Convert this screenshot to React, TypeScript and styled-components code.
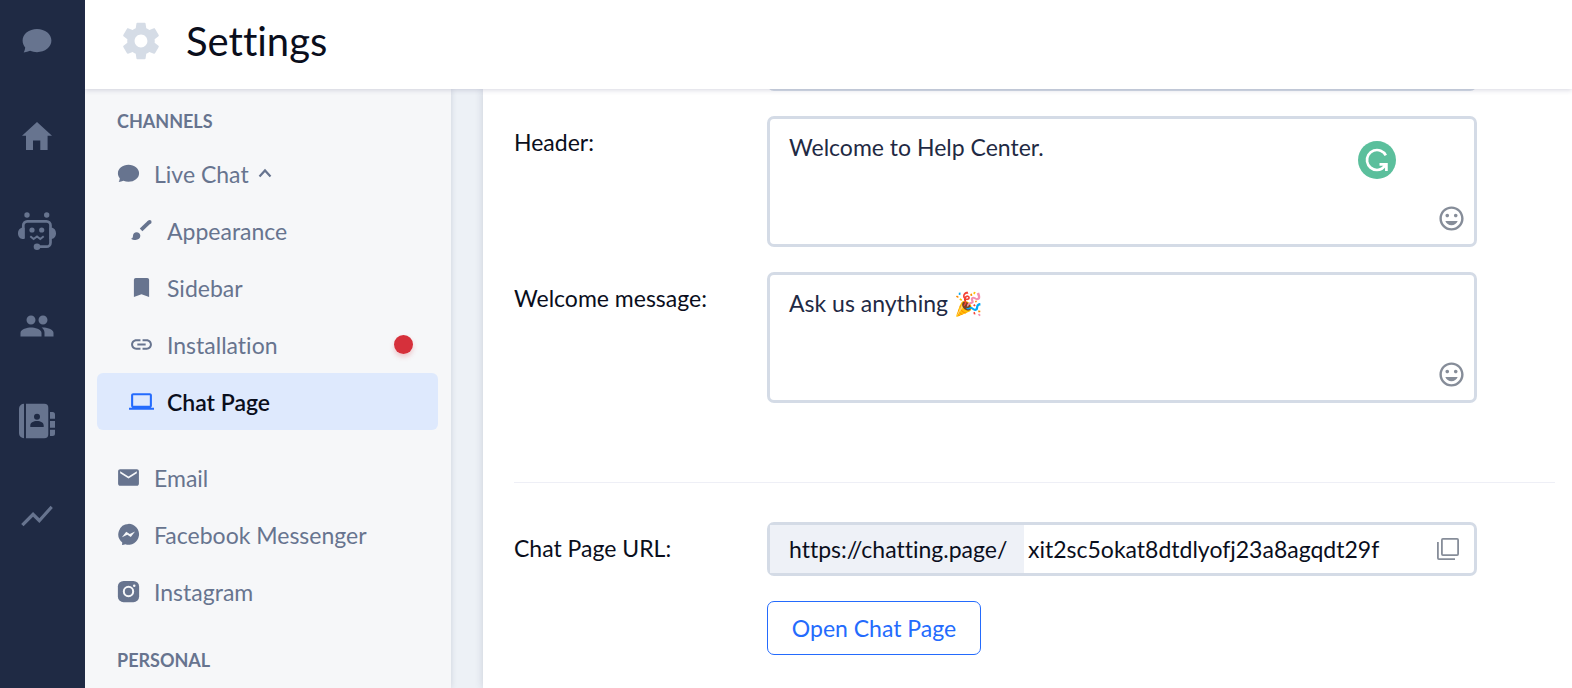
import React from "react";
import styled, { createGlobalStyle } from "styled-components";
import { MdPeople, MdShowChart, MdLink, MdLaptop, MdEmail, MdMood } from "react-icons/md";

const color = {
  rail: "#1f2a44",
  muted: "#67748f",
  ink: "#0a0e1c",
  field: "#1f2a44",
  border: "#d4dbe6",
  side: "#f6f7f9",
  gutter: "#edf1f6",
  active: "#dee9fd",
  blue: "#246bfd",
  icon: "#868d99",
};

const GlobalStyle = createGlobalStyle`
  * { box-sizing: border-box; }
  body {
    margin: 0;
    font-family: Lato, "Liberation Sans", sans-serif;
    font-size: 23px;
    line-height: 28px;
    font-variant-ligatures: none;
    color: ${color.ink};
    background: #fff;
  }
  button, input, textarea { font: inherit; font-variant-ligatures: none; color: inherit; }
  svg { display: block; flex: none; }
`;

const Shell = styled.div`
  display: grid;
  grid-template-columns: 85px minmax(0, 1fr);
  height: 100vh;
  overflow: hidden;
`;

const Rail = styled.nav`
  display: flex;
  flex-direction: column;
  gap: 55px;
  padding: 21px 11px 0 0;
  background: ${color.rail};
`;

const RailButton = styled.button`
  display: flex;
  align-items: center;
  justify-content: center;
  height: 40px;
  padding: 0;
  border: 0;
  background: none;
  color: ${color.muted};
  cursor: pointer;
`;

const Page = styled.div`
  display: grid;
  grid-template-rows: 89px minmax(0, 1fr);
  min-width: 0;
  min-height: 0;
`;

const TopBar = styled.header`
  position: relative;
  z-index: 1;
  display: flex;
  align-items: center;
  gap: 23px;
  padding: 0 34px 7px;
  background: #fff;
  color: #d5dce6;
  box-shadow: 0 1px 5px rgba(50, 50, 100, 0.2);
`;

const Title = styled.h1`
  margin: 0;
  font-size: 40px;
  line-height: 48px;
  font-weight: 400;
  color: ${color.ink};
`;

const Body = styled.div`
  display: grid;
  grid-template-columns: 366px minmax(0, 1fr);
  gap: 32px;
  min-height: 0;
  overflow: hidden;
  background: ${color.gutter};
`;

const Sidebar = styled.aside`
  padding: 20px 13px 0 12px;
  background: ${color.side};
  color: ${color.muted};
  overflow: hidden;
  box-shadow: 0 0 6px rgba(40, 50, 90, 0.16);
`;

const GroupTitle = styled.h2`
  margin: 0;
  padding: 0 20px;
  font-size: 18px;
  line-height: 24px;
  font-weight: 700;
`;

const NavList = styled.ul<{ $after: number }>`
  list-style: none;
  margin: 0 0 ${(p) => p.$after}px;
  padding: 0;
`;

const TopList = styled(NavList)`
  margin-top: 12px;
`;

const NavLink = styled.a<{ $nested?: boolean; $active?: boolean }>`
  display: flex;
  align-items: center;
  gap: 13px;
  height: 57px;
  padding: 0 25px 0 ${(p) => (p.$nested ? 32 : 19)}px;
  border-radius: 6px;
  background: ${(p) => (p.$active ? color.active : "transparent")};
  color: ${(p) => (p.$active ? color.ink : "inherit")};
  font-weight: ${(p) => (p.$active ? 600 : 400)};
  text-decoration: none;

  > svg:first-child {
    color: ${(p) => (p.$active ? color.blue : "inherit")};
  }
`;

const Caret = styled.svg`
  margin-left: -4px;
`;

const Alert = styled.span`
  width: 19px;
  height: 19px;
  margin-left: auto;
  border-radius: 50%;
  background: #d6303b;
  box-shadow: 0 3px 5px rgba(214, 48, 59, 0.25);
`;

const Panel = styled.main`
  background: #fff;
  overflow: hidden;
  box-shadow: 0 0 8px rgba(40, 50, 90, 0.18);
`;

const Form = styled.form`
  display: flex;
  flex-direction: column;
  gap: 25px;
  margin-top: -52px;
  padding: 0 17px 32px 31px;
`;

const Row = styled.div`
  display: grid;
  grid-template-columns: 253px minmax(0, 1fr);
  align-items: start;
  padding-right: 78px;
`;

const Label = styled.label`
  padding-top: 12px;
`;

const FieldBox = styled.div`
  position: relative;
  display: flex;
`;

const TextInput = styled.input`
  flex: 1;
  min-width: 0;
  height: 54px;
  padding: 0 19px;
  border: 3px solid ${color.border};
  border-radius: 7px;
  background: #fff;
  outline: none;
`;

const TextArea = styled.textarea`
  flex: 1;
  min-width: 0;
  height: 131px;
  padding: 14px 60px 14px 19px;
  border: 3px solid ${color.border};
  border-radius: 7px;
  background: #fff;
  color: ${color.field};
  resize: none;
  outline: none;
`;

const IconButton = styled.button`
  display: flex;
  align-items: center;
  padding: 0;
  border: 0;
  background: none;
  color: ${color.icon};
  cursor: pointer;
`;

const EmojiButton = styled(IconButton)`
  position: absolute;
  right: 11px;
  bottom: 14px;
`;

const WritingBadge = styled(IconButton)`
  position: absolute;
  right: 81px;
  top: 25px;
`;

const Divider = styled.hr`
  width: 100%;
  margin: 54px 0 14px;
  border: 0;
  border-top: 1px solid #eeeff6;
`;

const UrlBox = styled.div`
  display: flex;
  align-items: stretch;
  height: 54px;
  padding-right: 14px;
  border: 3px solid ${color.border};
  border-radius: 7px;
  background: #fff;
`;

const UrlPrefix = styled.span`
  display: flex;
  align-items: center;
  min-width: 254px;
  padding: 0 4px 0 19px;
  background: #eef1f7;
`;

const UrlInput = styled.input`
  flex: 1;
  min-width: 0;
  padding: 0 4px;
  border: 0;
  background: none;
  outline: none;
`;

const UrlColumn = styled.div`
  display: flex;
  flex-direction: column;
  gap: 25px;
`;

const OutlineButton = styled.button`
  align-self: flex-start;
  min-width: 214px;
  height: 54px;
  padding: 0 19px;
  border: 1px solid ${color.blue};
  border-radius: 7px;
  background: #fff;
  color: ${color.blue};
  cursor: pointer;
`;

const Bubble = ({ size, inset = 0 }: { size: number; inset?: number }) => (
  <svg
    width={size}
    height={size}
    viewBox={`${-inset} ${-inset} ${30 + 2 * inset} ${30 + 2 * inset}`}
    fill="currentColor"
    aria-hidden
  >
    <path d="M15 3C7 3 .6 8 .6 14.6c0 2.800 1 5 2.600 7-.2 1.800-.7 3.600-1.500 4.900 2.300-.2 4.500-.8 6.400-1.700 2.100.9 4.500 1.400 6.900 1.400 8 0 14.400-5 14.400-11.600S23 3 15 3z" />
  </svg>
);

const Home = () => (
  <svg width="36" height="36" viewBox="0 0 36 36" fill="currentColor" aria-hidden>
    <path d="M18 4 3 17.700h4V32h7v-9.600h7.300V32h7.300V17.700H33z" />
  </svg>
);

const Robot = () => (
  <svg width="40" height="40" viewBox="0 0 40 40" fill="none" stroke="currentColor" strokeWidth="2.700" aria-hidden>
    <path d="M6.300 27V14.300a4 4 0 0 1 4-4h19.200a4 4 0 0 1 4 4v17.400a4 4 0 0 1-4 4H20" />
    <path d="m13.300 25.200 3.300 2.800 3.400-2.600 3.300 2.600 3.400-2.800" strokeWidth="2" />
    <g fill="currentColor" stroke="none">
      <circle cx="10" cy="4" r="2.700" />
      <circle cx="29.700" cy="4" r="2.700" />
      <circle cx="15" cy="19" r="2.600" />
      <circle cx="24.700" cy="19" r="2.600" />
      <circle cx="20" cy="35.700" r="3.300" />
      <path d="M7.600 16.700V28H5.500C3 28 1 25.500 1 22.300s2-5.600 4.500-5.600zM32.400 16.700V28h2.100c2.500 0 4.500-2.500 4.500-5.700s-2-5.600-4.500-5.600z" />
    </g>
  </svg>
);

const AddressBook = () => (
  <svg width="40" height="40" viewBox="0 0 40 40" fill="currentColor" aria-hidden>
    <path d="M7 2.700v34.600a5 5 0 0 1-5-5V7.700a5 5 0 0 1 5-5z" />
    <path
      fillRule="evenodd"
      d="M9 2.700h18.300a4 4 0 0 1 4 4v26.600a4 4 0 0 1-4 4H9zM20 12.700a3 3 0 1 0 0 6 3 3 0 0 0 0-6zM13.300 26h13.400v-1.500c0-3-3-4.500-6.700-4.500s-6.700 1.500-6.700 4.500z"
    />
    <path d="M33 11h2.500a2.500 2.500 0 0 1 2.500 2.500v4.200h-5zM33 20h5v6.700h-5zM33 28.800h5v3.700a2.500 2.500 0 0 1-2.500 2.500H33z" />
  </svg>
);

const Gear = () => (
  <svg width="44" height="44" viewBox="0 0 24 24" fill="currentColor" aria-hidden>
    <path d="M19.430 12.980c.04-.32.07-.64.07-.98s-.03-.66-.07-.98l2.110-1.650c.19-.15.24-.42.12-.64l-2-3.460c-.12-.22-.39-.3-.61-.22l-2.490 1c-.52-.4-1.080-.73-1.690-.98l-.38-2.650C14.460 2.180 14.250 2 14 2h-4c-.25 0-.46.18-.49.42l-.38 2.650c-.61.25-1.170.59-1.690.98l-2.490-1c-.23-.09-.49 0-.61.22l-2 3.460c-.13.22-.07.49.12.64l2.110 1.650c-.04.32-.07.65-.07.98s.03.66.07.98l-2.110 1.650c-.19.15-.24.42-.12.64l2 3.460c.12.22.39.3.61.22l2.490-1c.52.4 1.080.73 1.690.98l.38 2.650c.03.24.24.42.49.42h4c.25 0 .46-.18.49-.42l.38-2.650c.61-.25 1.170-.59 1.690-.98l2.490 1c.23.09.49 0 .61-.22l2-3.460c.12-.22.07-.49-.12-.64l-2.110-1.650zM12 15.500c-1.930 0-3.500-1.570-3.500-3.500s1.570-3.500 3.500-3.500 3.500 1.570 3.500 3.500-1.570 3.500-3.500 3.500z" />
  </svg>
);

const Brush = () => (
  <svg width="25" height="25" viewBox="0 0 24 24" fill="currentColor" aria-hidden>
    <path d="M19.400 3.900 11.600 11.400" stroke="currentColor" strokeWidth="3.600" />
    <circle cx="19.800" cy="3.800" r="1.900" />
    <path d="M7.200 13.600c2.100 0 3.700 1.600 3.700 3.500 0 2.400-2 4-4.600 4-1.700 0-3.400-.4-4.500-1.300 1.300 0 2-.9 2-2.500 0-2.100 1.500-3.700 3.400-3.700z" />
  </svg>
);

const Bookmark = () => (
  <svg width="25" height="25" viewBox="0 0 24 24" fill="currentColor" aria-hidden>
    <path d="M6.500 2.800h11a1.800 1.800 0 0 1 1.800 1.800v16.600L12 18.400l-7.300 2.800V4.600a1.800 1.800 0 0 1 1.800-1.800z" />
  </svg>
);

const Messenger = () => (
  <svg width="25" height="25" viewBox="0 0 24 24" aria-hidden>
    <path fill="currentColor" d="M12 1.800a10 10 0 1 1-3 19.500 14 14 0 0 1-3.200.8l.2-2.500A10 10 0 0 1 12 1.800z" />
    <path fill={color.side} d="m5.700 14.700 4.100-5.400 3.400 2.200L18.300 9l-4.100 5.400-3.300-2.200z" />
  </svg>
);

const Instagram = () => (
  <svg width="25" height="25" viewBox="0 0 24 24" aria-hidden>
    <rect x="1.800" y="1.800" width="20.400" height="20.400" rx="5.500" fill="currentColor" />
    <circle cx="12" cy="12" r="4.500" fill="none" stroke={color.side} strokeWidth="1.900" />
    <circle cx="17.500" cy="6.400" r="1.200" fill={color.side} />
  </svg>
);

const Copy = () => (
  <svg width="24" height="24" viewBox="0 0 24 24" fill="none" stroke="currentColor" strokeWidth="1.800" aria-hidden>
    <rect x="5.900" y="1.900" width="16.200" height="16.200" rx="1" />
    <path d="M1.900 5v16.100a1 1 0 0 0 1 1H19" />
  </svg>
);

const WritingMark = () => (
  <svg width="38" height="38" viewBox="0 0 38 38" fill="none" stroke="#fff" strokeWidth="2.700" aria-hidden>
    <circle cx="19" cy="19" r="19" fill="#5bbf9c" stroke="none" />
    <path d="M27.800 14.300A10 10 0 1 0 19 29c3.400 0 6.300-1.700 8.200-5" />
    <path d="M21.500 23.300h6.900V30" />
  </svg>
);

const NavItem = ({
  icon,
  label,
  nested,
  active,
  extra,
}: {
  icon: React.ReactNode;
  label: string;
  nested?: boolean;
  active?: boolean;
  extra?: React.ReactNode;
}) => (
  <li>
    <NavLink href="#" $nested={nested} $active={active} aria-current={active ? "page" : undefined}>
      {icon}
      <span>{label}</span>
      {extra}
    </NavLink>
  </li>
);

const MessageField = ({
  id,
  label,
  value,
  children,
}: {
  id: string;
  label: string;
  value: string;
  children?: React.ReactNode;
}) => (
  <Row>
    <Label htmlFor={id}>{label}</Label>
    <FieldBox>
      <TextArea id={id} defaultValue={value} spellCheck={false} />
      {children}
      <EmojiButton type="button" aria-label="Insert emoji">
        <MdMood size={29} />
      </EmojiButton>
    </FieldBox>
  </Row>
);

export default function App() {
  return (
    <>
      <GlobalStyle />
      <Shell>
        <Rail aria-label="Main">
          <RailButton aria-label="Conversations"><Bubble size={30} /></RailButton>
          <RailButton aria-label="Home"><Home /></RailButton>
          <RailButton aria-label="Bots"><Robot /></RailButton>
          <RailButton aria-label="Team"><MdPeople size={36} /></RailButton>
          <RailButton aria-label="Contacts"><AddressBook /></RailButton>
          <RailButton aria-label="Analytics"><MdShowChart size={38} /></RailButton>
        </Rail>
        <Page>
          <TopBar>
            <Gear />
            <Title>Settings</Title>
          </TopBar>
          <Body>
            <Sidebar>
              <GroupTitle>CHANNELS</GroupTitle>
              <TopList $after={19}>
                <NavItem
                  icon={<Bubble size={25} inset={2} />}
                  label="Live Chat"
                  extra={
                    <Caret width="14" height="14" viewBox="0 0 14 14" fill="none" stroke="currentColor" strokeWidth="2.200" aria-hidden>
                      <path d="m1.500 9.500 5.500-6 5.500 6" />
                    </Caret>
                  }
                />
                <NavItem nested icon={<Brush />} label="Appearance" />
                <NavItem nested icon={<Bookmark />} label="Sidebar" />
                <NavItem nested icon={<MdLink size={25} />} label="Installation" extra={<Alert />} />
                <NavItem nested active icon={<MdLaptop size={25} />} label="Chat Page" />
              </TopList>
              <NavList $after={28}>
                <NavItem icon={<MdEmail size={25} />} label="Email" />
                <NavItem icon={<Messenger />} label="Facebook Messenger" />
                <NavItem icon={<Instagram />} label="Instagram" />
              </NavList>
              <GroupTitle>PERSONAL</GroupTitle>
            </Sidebar>
            <Panel>
              <Form>
                <Row>
                  <span />
                  <FieldBox>
                    <TextInput aria-label="Name" />
                  </FieldBox>
                </Row>
                <MessageField id="header" label="Header:" value="Welcome to Help Center.">
                  <WritingBadge type="button" aria-label="Check writing">
                    <WritingMark />
                  </WritingBadge>
                </MessageField>
                <MessageField id="welcome" label="Welcome message:" value="Ask us anything 🎉" />
                <Divider />
                <Row>
                  <Label htmlFor="url">Chat Page URL:</Label>
                  <UrlColumn>
                    <UrlBox>
                      <UrlPrefix>https://chatting.page/</UrlPrefix>
                      <UrlInput id="url" defaultValue="xit2sc5okat8dtdlyofj23a8agqdt29f" spellCheck={false} />
                      <IconButton type="button" aria-label="Copy URL">
                        <Copy />
                      </IconButton>
                    </UrlBox>
                    <OutlineButton type="button">Open Chat Page</OutlineButton>
                  </UrlColumn>
                </Row>
              </Form>
            </Panel>
          </Body>
        </Page>
      </Shell>
    </>
  );
}
